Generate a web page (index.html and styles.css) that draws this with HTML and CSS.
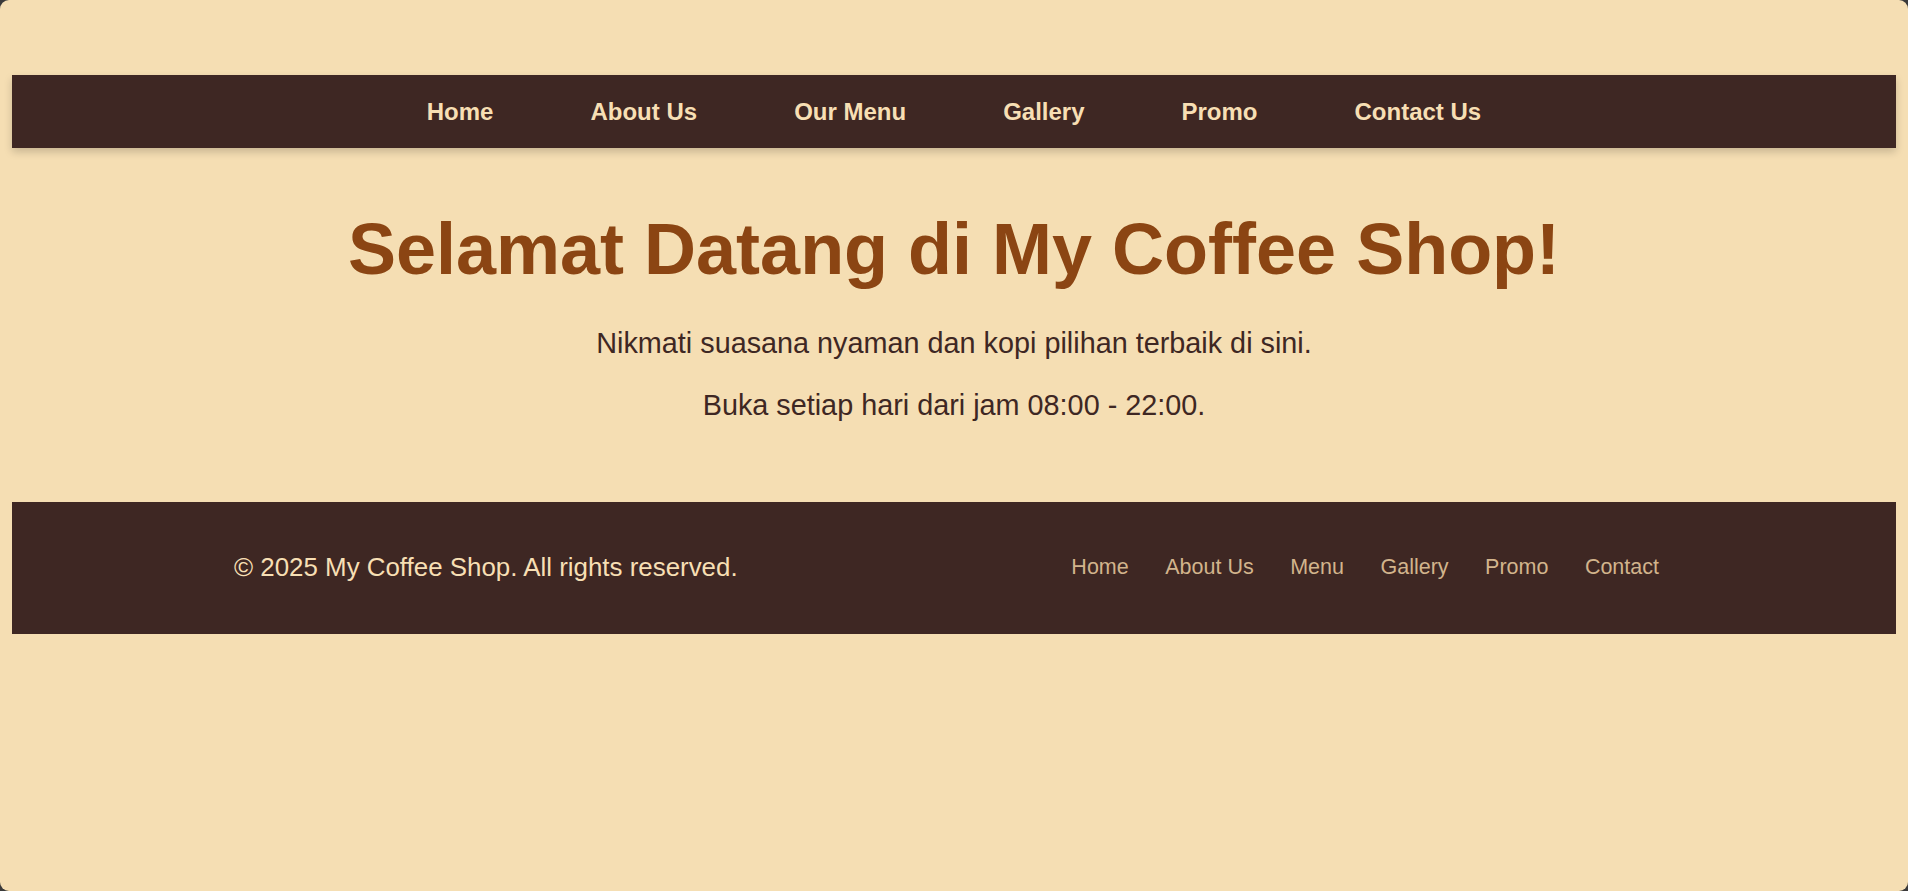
FILE: index.html
```html
<!DOCTYPE html>
<html lang="id">
<head>
<meta charset="utf-8">
<title>My Coffee Shop</title>
<link rel="stylesheet" href="styles.css">
</head>
<body>
<div class="window">
  <nav class="topnav">
    <ul class="nav-list">
      <li><a href="#">Home</a></li>
      <li><a href="#">About Us</a></li>
      <li><a href="#">Our Menu</a></li>
      <li><a href="#">Gallery</a></li>
      <li><a href="#">Promo</a></li>
      <li><a href="#">Contact Us</a></li>
    </ul>
  </nav>
  <main class="hero">
    <h1 class="hero-title">Selamat Datang di My Coffee Shop!</h1>
    <p class="hero-text">Nikmati suasana nyaman dan kopi pilihan terbaik di sini.</p>
    <p class="hero-text">Buka setiap hari dari jam 08:00 - 22:00.</p>
  </main>
  <footer class="site-footer">
    <div class="footer-inner">
      <p class="copyright">© 2025 My Coffee Shop. All rights reserved.</p>
      <ul class="footer-links">
        <li><a href="#">Home</a></li>
        <li><a href="#">About Us</a></li>
        <li><a href="#">Menu</a></li>
        <li><a href="#">Gallery</a></li>
        <li><a href="#">Promo</a></li>
        <li><a href="#">Contact</a></li>
      </ul>
    </div>
  </footer>
</div>
</body>
</html>
```
FILE: styles.css
```css
html {
  margin: 0;
  padding: 0;
  background: #3a3a3a;
}

body {
  margin: 0;
  padding: 0;
  font-family: "Liberation Sans", Arial, sans-serif;
}

.window {
  height: 891px;
  box-sizing: border-box;
  padding: 75px 12px 0;
  background: #f5deb3;
  border-radius: 9px;
  overflow: hidden;
}

.topnav {
  height: 73px;
  background: #3e2723;
  box-shadow: 0 4px 8px rgba(0, 0, 0, 0.18);
  display: flex;
  align-items: center;
  justify-content: center;
}

.nav-list {
  list-style: none;
  margin: 0;
  padding: 0;
  display: flex;
  gap: 97px;
}

.nav-list a {
  color: #f7dfb4;
  text-decoration: none;
  font-weight: bold;
  font-size: 24px;
}

.hero {
  text-align: center;
  padding: 60px 0 51px;
}

.hero-title {
  margin: 0 0 37px;
  font-size: 72px;
  font-weight: bold;
  color: #8b4513;
}

.hero-text {
  margin: 28.8px 0;
  font-size: 28.8px;
  color: #3e2723;
}

.site-footer {
  height: 132px;
  background: #3e2723;
  display: flex;
  align-items: center;
  justify-content: center;
}

.footer-inner {
  width: 1440px;
  display: flex;
  align-items: center;
  justify-content: space-between;
}

.copyright {
  margin: 0;
  font-size: 25.9px;
  color: #f7dfb4;
}

.footer-links {
  list-style: none;
  margin: 0;
  padding: 0 15px 0 0;
  display: flex;
  gap: 36.5px;
}

.footer-links a {
  color: #d2b48c;
  text-decoration: none;
  font-size: 21.5px;
}
```
